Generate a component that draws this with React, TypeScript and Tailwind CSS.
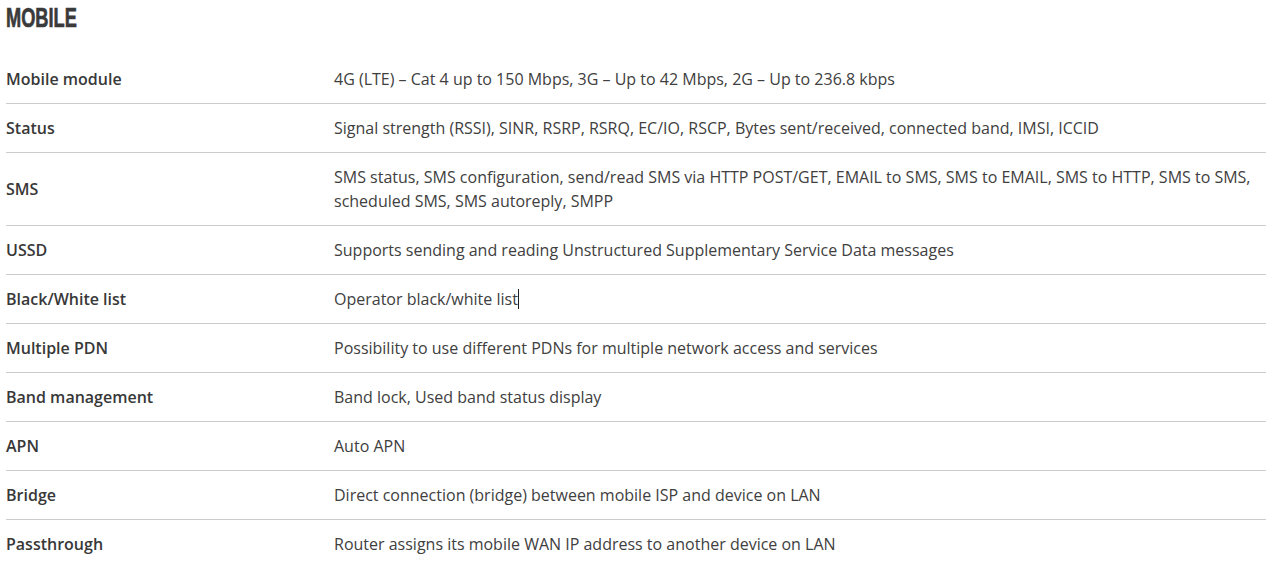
import React from "react";

const rows: [string, string][] = [
  ["Mobile module", "4G (LTE) – Cat 4 up to 150 Mbps, 3G – Up to 42 Mbps, 2G – Up to 236.8 kbps"],
  ["Status", "Signal strength (RSSI), SINR, RSRP, RSRQ, EC/IO, RSCP, Bytes sent/received, connected band, IMSI, ICCID"],
  ["SMS", "SMS status, SMS configuration, send/read SMS via HTTP POST/GET, EMAIL to SMS, SMS to EMAIL, SMS to HTTP, SMS to SMS, scheduled SMS, SMS autoreply, SMPP"],
  ["USSD", "Supports sending and reading Unstructured Supplementary Service Data messages"],
  ["Black/White list", "Operator black/white list"],
  ["Multiple PDN", "Possibility to use different PDNs for multiple network access and services"],
  ["Band management", "Band lock, Used band status display"],
  ["APN", "Auto APN"],
  ["Bridge", "Direct connection (bridge) between mobile ISP and device on LAN"],
  ["Passthrough", "Router assigns its mobile WAN IP address to another device on LAN"],
];

export default function App() {
  return (
    <div className="bg-white w-[1270px] h-[574px] overflow-hidden text-[#404040] [font-family:'Open_Sans',sans-serif]">
      <div className="pl-[6px] pr-[4px] pt-[3px]">
        <h2 className="h-[30px] text-[28px] leading-[30px] font-bold text-[#3a3a3a] [font-family:'Liberation_Sans',sans-serif]">
          <span className="inline-block origin-left [transform:scaleX(0.65)] [-webkit-text-stroke:0.7px_#3a3a3a]">MOBILE</span>
        </h2>
        <div className="mt-[22px]">
          {rows.map(([k, v], i) => (
            <div
              key={k}
              className={`flex items-center py-[12px] text-[16px] leading-[24px] ${i < rows.length - 1 ? "border-b border-[#cccccc]" : ""}`}
            >
              <div className="w-[328px] shrink-0 font-semibold text-[#383838]">{k}</div>
              <div className="flex-1 pr-[8px]">
                {v}
                {k === "Black/White list" && (
                  <span className="inline-block w-px h-[20px] bg-[#222] align-[-4px]" />
                )}
              </div>
            </div>
          ))}
        </div>
      </div>
    </div>
  );
}
